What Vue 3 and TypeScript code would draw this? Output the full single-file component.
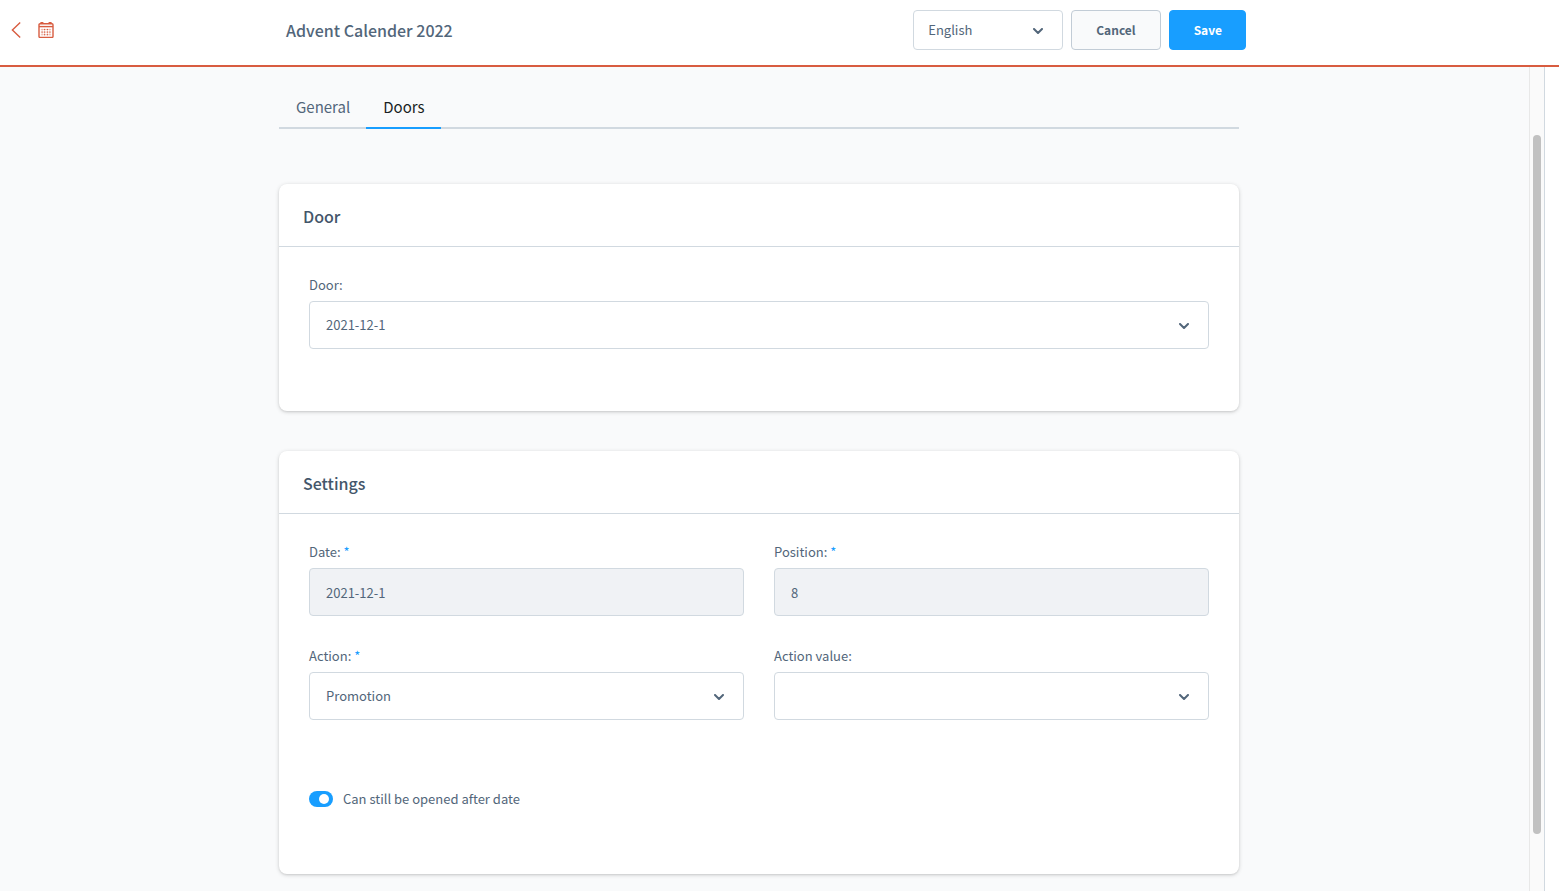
<script setup lang="ts">
import { ref } from 'vue'

type Tab = 'General' | 'Doors'

const tabs: Tab[] = ['General', 'Doors']
const activeTab = ref<Tab>('Doors')
const language = ref('English')
const door = ref('2021-12-1')
const date = ref('2021-12-1')
const position = ref('8')
const action = ref('Promotion')
const actionValue = ref('')
const openAfterDate = ref(true)
</script>

<template>
  <div class="page">
    <header class="topbar">
      <nav class="topbar-nav">
        <a href="#" class="back" aria-label="Back">
          <svg width="10" height="16" viewBox="0 0 10 16">
            <path d="M9.2 0.5 1.4 8l7.8 7.5" />
          </svg>
        </a>
        <svg class="calendar" width="16" height="16" viewBox="0 0 16 16" aria-hidden="true">
          <rect x="1" y="1.8" width="14" height="13.6" rx="1" class="frame" />
          <path d="M1 4.6h14" class="frame" />
          <path d="M2.4 0.9h3M10.6 0.9h3" class="ring" />
          <path d="M2.8 7.5h10.4M2.8 10.1h10.4M2.8 12.7h10.4" class="grid-line" />
          <path d="M4.1 6.6v7M6.6 6.6v7M9.4 6.6v7M11.9 6.6v7" class="grid-line" />
          <path d="M6 7.5h1.1M8.9 7.5h1.1M6 12.7h1.1M8.9 12.7h1.1M3.6 10.1h1M6 10.1h1.1M8.9 10.1h1.1M11.4 10.1h1" class="dot" />
        </svg>
      </nav>
      <div class="topbar-content">
        <h1>Advent Calender 2022</h1>
        <div class="actions">
          <div class="select-wrap language">
            <select v-model="language" aria-label="Language">
              <option>English</option>
            </select>
            <svg class="chevron" width="10" height="6" viewBox="0 0 10 6"><path d="m1 1 4 4 4-4" /></svg>
          </div>
          <button type="button" class="btn cancel">Cancel</button>
          <button type="button" class="btn save">Save</button>
        </div>
      </div>
    </header>

    <div class="workspace">
      <main class="scroll-area">
        <div class="column">
          <div class="tabs" role="tablist">
            <button
              v-for="tab in tabs"
              :key="tab"
              type="button"
              role="tab"
              class="tab"
              :class="{ active: tab === activeTab }"
              :aria-selected="tab === activeTab"
              @click="activeTab = tab"
            >
              {{ tab }}
            </button>
          </div>

          <section class="card">
            <h2>Door</h2>
            <div class="card-body">
              <div class="field">
                <label for="door">Door:</label>
                <div class="select-wrap">
                  <select id="door" v-model="door">
                    <option>2021-12-1</option>
                  </select>
                  <svg class="chevron" width="10" height="6" viewBox="0 0 10 6"><path d="m1 1 4 4 4-4" /></svg>
                </div>
              </div>
            </div>
          </section>

          <section class="card">
            <h2>Settings</h2>
            <div class="card-body">
              <div class="field-grid">
                <div class="field">
                  <label for="date">Date: <span class="required">*</span></label>
                  <input id="date" v-model="date" type="text" disabled />
                </div>
                <div class="field">
                  <label for="position">Position: <span class="required">*</span></label>
                  <input id="position" v-model="position" type="text" disabled />
                </div>
                <div class="field">
                  <label for="action">Action: <span class="required">*</span></label>
                  <div class="select-wrap">
                    <select id="action" v-model="action">
                      <option>Promotion</option>
                    </select>
                    <svg class="chevron" width="10" height="6" viewBox="0 0 10 6"><path d="m1 1 4 4 4-4" /></svg>
                  </div>
                </div>
                <div class="field">
                  <label for="action-value">Action value:</label>
                  <div class="select-wrap">
                    <select id="action-value" v-model="actionValue">
                      <option value=""></option>
                    </select>
                    <svg class="chevron" width="10" height="6" viewBox="0 0 10 6"><path d="m1 1 4 4 4-4" /></svg>
                  </div>
                </div>
              </div>
              <div class="switch-row">
                <input id="open-after" v-model="openAfterDate" type="checkbox" class="switch" />
                <label for="open-after">Can still be opened after date</label>
              </div>
            </div>
          </section>
        </div>
      </main>
      <div class="scrollbar" aria-hidden="true">
        <div class="thumb"></div>
      </div>
      <aside class="side-strip"></aside>
    </div>
  </div>
</template>

<style>
body {
  margin: 0;
}
</style>

<style scoped>
.page,
.page * {
  box-sizing: border-box;
}

.page {
  display: flex;
  flex-direction: column;
  height: 100vh;
  overflow: hidden;
  background: #f9fafb;
  color: #52667a;
  font-family: 'Source Sans Pro', 'Noto Sans CJK SC', 'Open Sans', sans-serif;
  font-size: 13px;
  line-height: 20px;
}

button,
input,
select {
  font: inherit;
  color: inherit;
}

.topbar {
  display: grid;
  flex: none;
  grid-template-columns: minmax(72px, 1fr) minmax(0, 960px) minmax(0, 1fr);
  align-items: start;
  padding-right: 27px;
  background: #fff;
  border-bottom: 2px solid #d85c40;
}

.topbar-nav {
  display: flex;
  gap: 17px;
  align-items: center;
  height: 60px;
  padding-left: 11px;
}

.back {
  display: flex;
}

.topbar-nav svg {
  fill: none;
  stroke: #d85c40;
}

.back path {
  stroke-width: 1.4;
}

.calendar .frame {
  stroke-width: 1.4;
}

.calendar .ring {
  stroke-width: 1.8;
}

.calendar .grid-line {
  stroke-width: 1;
  opacity: 0.3;
}

.calendar .dot {
  stroke-width: 1;
}

.topbar-content {
  display: flex;
  align-items: center;
  justify-content: space-between;
  padding: 10px 0 15px;
}

h1,
h2 {
  margin: 0;
  font-size: 16px;
  font-weight: 500;
  line-height: 24px;
}

.actions {
  display: flex;
  gap: 8px;
}

.select-wrap {
  position: relative;
}

.select-wrap select,
.field input {
  display: block;
  width: 100%;
  height: 48px;
  padding: 0 40px 0 16px;
  margin: 0;
  appearance: none;
  background: #fff;
  border: 1px solid #d1d9e0;
  border-radius: 4px;
  outline: none;
}

.field input:disabled {
  background: #f0f2f5;
  opacity: 1;
}

.chevron {
  position: absolute;
  top: 50%;
  right: 20px;
  margin-top: -2px;
  pointer-events: none;
  fill: none;
  stroke: #52667a;
  stroke-width: 2;
  stroke-linecap: round;
  stroke-linejoin: round;
}

.language {
  width: 150px;
}

.language select {
  height: 40px;
  padding-left: 14px;
}

.btn {
  height: 40px;
  padding: 0 24px;
  font-size: 12px;
  font-weight: 700;
  border: 1px solid #c2ccd6;
  border-radius: 4px;
}

.cancel {
  background: #f9fafb;
}

.save {
  padding: 0 23px 0 24px;
  color: #fff;
  background: #189eff;
  border-color: #189eff;
}

.workspace {
  display: flex;
  flex: 1;
  min-height: 0;
}

.scroll-area {
  flex: 1;
  padding: 20px 11px 17px 0;
  overflow: hidden;
}

.column {
  width: 100%;
  max-width: 960px;
  margin: 0 auto;
}

.tabs {
  display: flex;
  margin-bottom: 55px;
  box-shadow: inset 0 -2px #d1d9e0;
}

.tab {
  padding: 10px 16px 10px 17px;
  font-size: 15px;
  line-height: 20px;
  background: none;
  border: 0;
  border-bottom: 2px solid transparent;
}

.tab.active {
  color: #1a1f24;
  border-bottom-color: #189eff;
}

.card {
  margin-bottom: 40px;
  background: #fff;
  border-radius: 8px;
  box-shadow: 0 1px 4px rgba(0, 0, 0, 0.16), 0 1px 2px rgba(0, 0, 0, 0.08);
}

h2 {
  padding: 20px 24px 18px;
  color: #44566a;
  border-bottom: 1px solid #d1d9e0;
}

.card-body {
  padding: 28px 30px 62px;
}

.field label {
  display: block;
  margin-bottom: 6px;
}

.required {
  color: #189eff;
}

.field-grid {
  display: grid;
  grid-template-columns: 1fr 1fr;
  gap: 30px;
}

.switch-row {
  display: flex;
  gap: 10px;
  align-items: center;
  margin: 69px 0 3px;
}

.switch {
  display: flex;
  align-items: center;
  width: 24px;
  height: 16px;
  padding: 0 4px;
  margin: 0;
  appearance: none;
  background: #c2ccd6;
  border-radius: 8px;
}

.switch::before {
  width: 10px;
  height: 10px;
  content: '';
  background: #fff;
  border-radius: 50%;
}

.switch:checked {
  justify-content: flex-end;
  background: #189eff;
}

.scrollbar {
  width: 15px;
  padding: 68px 3px 57px;
  background: #fafafa;
  border-left: 1px solid #e8e8e8;
}

.thumb {
  width: 8px;
  height: 100%;
  background: #c1c1c1;
  border-radius: 4px;
}

.side-strip {
  width: 15px;
  background: #fff;
  border-left: 1px solid #d1d9e0;
}
</style>
